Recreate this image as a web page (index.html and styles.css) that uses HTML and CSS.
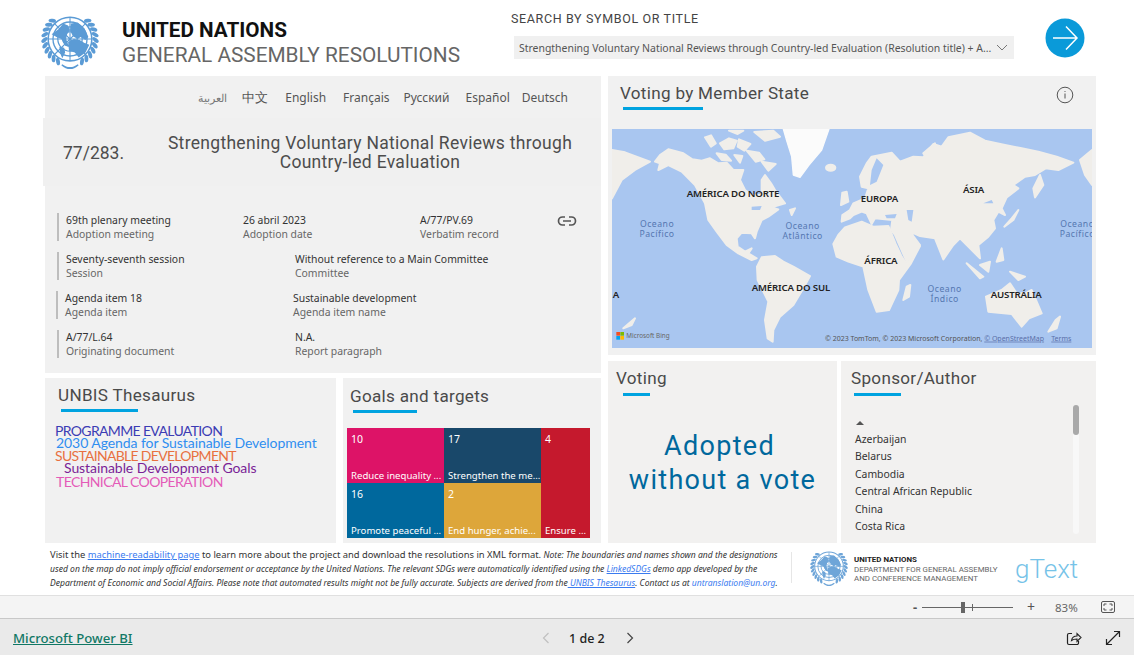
FILE: index.html
```html
<!DOCTYPE html>
<html lang="en">
<head>
<meta charset="utf-8">
<title>United Nations General Assembly Resolutions</title>
<link rel="stylesheet" href="styles.css">
</head>
<body>
<svg class="defs" width="0" height="0" aria-hidden="true">
  <symbol id="un" viewBox="0 0 60 60">
    <g fill="none" stroke="currentColor">
      <circle cx="30" cy="29" r="22.6" stroke-width="1.600"/>
      <circle cx="30" cy="29" r="17.600" stroke-width="1.400"/>
      <circle cx="30" cy="29" r="12.600" stroke-width="1.300"/>
      <circle cx="30" cy="29" r="7.500" stroke-width="1.200"/>
      <path stroke-width="1.100" d="M30 6.400V51.600M7.400 29H52.600M14 13L46 45M46 13L14 45"/>
    </g>
    <g fill="currentColor">
      <path d="M11 24l7-5 5-6 5 2 2 5-3 4-1 5 3 8-4-1-4-7-5-2zM31 13l7-1 7 6 4 9-3 3-5-3-3 2-5-3-3-6zM28 32l6-3 6 1 5 3 5 2-4 8-7 5-4-5-6-2zM19 37l5 1 1 5-3 6-2-5z"/>
      <path d="M22 55c3 2 5 3 8 3s5-1 8-3l1 1c-3 3-6 4-9 4s-6-1-9-4z"/>
      <g class="wreath-r">
        <ellipse cx="30" cy="2.600" rx="2" ry="3.900" transform="rotate(44 30 29) rotate(38 30 2.600)"/>
        <ellipse cx="30" cy="2.600" rx="2" ry="3.900" transform="rotate(56 30 29) rotate(38 30 2.600)"/>
        <ellipse cx="30" cy="2.600" rx="2" ry="3.900" transform="rotate(68 30 29) rotate(38 30 2.600)"/>
        <ellipse cx="30" cy="2.600" rx="2" ry="3.900" transform="rotate(80 30 29) rotate(38 30 2.600)"/>
        <ellipse cx="30" cy="2.600" rx="2" ry="3.900" transform="rotate(92 30 29) rotate(38 30 2.600)"/>
        <ellipse cx="30" cy="2.600" rx="2" ry="3.900" transform="rotate(104 30 29) rotate(38 30 2.600)"/>
        <ellipse cx="30" cy="2.600" rx="2" ry="3.900" transform="rotate(116 30 29) rotate(38 30 2.600)"/>
        <ellipse cx="30" cy="2.600" rx="2" ry="3.900" transform="rotate(128 30 29) rotate(38 30 2.600)"/>
        <ellipse cx="30" cy="2.600" rx="2" ry="3.900" transform="rotate(140 30 29) rotate(38 30 2.600)"/>
        <ellipse cx="30" cy="2.600" rx="2" ry="3.900" transform="rotate(152 30 29) rotate(38 30 2.600)"/>
      </g>
      <g class="wreath-l">
        <ellipse cx="30" cy="2.600" rx="2" ry="3.900" transform="rotate(-44 30 29) rotate(-38 30 2.600)"/>
        <ellipse cx="30" cy="2.600" rx="2" ry="3.900" transform="rotate(-56 30 29) rotate(-38 30 2.600)"/>
        <ellipse cx="30" cy="2.600" rx="2" ry="3.900" transform="rotate(-68 30 29) rotate(-38 30 2.600)"/>
        <ellipse cx="30" cy="2.600" rx="2" ry="3.900" transform="rotate(-80 30 29) rotate(-38 30 2.600)"/>
        <ellipse cx="30" cy="2.600" rx="2" ry="3.900" transform="rotate(-92 30 29) rotate(-38 30 2.600)"/>
        <ellipse cx="30" cy="2.600" rx="2" ry="3.900" transform="rotate(-104 30 29) rotate(-38 30 2.600)"/>
        <ellipse cx="30" cy="2.600" rx="2" ry="3.900" transform="rotate(-116 30 29) rotate(-38 30 2.600)"/>
        <ellipse cx="30" cy="2.600" rx="2" ry="3.900" transform="rotate(-128 30 29) rotate(-38 30 2.600)"/>
        <ellipse cx="30" cy="2.600" rx="2" ry="3.900" transform="rotate(-140 30 29) rotate(-38 30 2.600)"/>
        <ellipse cx="30" cy="2.600" rx="2" ry="3.900" transform="rotate(-152 30 29) rotate(-38 30 2.600)"/>
      </g>
    </g>
  </symbol>
</svg>

<div class="report">
  <header class="top">
    <svg class="un-logo"><use href="#un"/></svg>
    <div class="brand">
      <div class="brand-main">UNITED NATIONS</div>
      <div class="brand-sub">GENERAL ASSEMBLY RESOLUTIONS</div>
    </div>
    <div class="search">
      <div class="search-label">SEARCH BY SYMBOL OR TITLE</div>
      <div class="search-box">
        <span>Strengthening Voluntary National Reviews through Country-led Evaluation (Resolution title) + A...</span>
        <svg class="chev" viewBox="0 0 12 7"><path d="M1 1l5 5 5-5" fill="none" stroke="#777" stroke-width="1"/></svg>
      </div>
    </div>
    <svg class="go" viewBox="0 0 40 40">
      <circle cx="20" cy="20" r="19.500" fill="#0a9ad9"/>
      <path d="M8 20H31M21 8.500L32 20L21 31.500" fill="none" stroke="#fff" stroke-width="1.500"/>
    </svg>
  </header>

  <main class="board">
    <div class="col-left">
      <section class="panel resolution">
        <nav class="langs">
          <span class="lang-ar" lang="ar">العربية</span>
          <span class="lang-zh" lang="zh">中文</span>
          <span class="lang-en">English</span>
          <span>Français</span>
          <span>Русский</span>
          <span class="lang-es">Español</span>
          <span>Deutsch</span>
        </nav>
        <div class="res-head">
          <div class="res-num">77/283.</div>
          <h1 class="res-title">Strengthening Voluntary National Reviews through Country-led Evaluation</h1>
        </div>
        <div class="meta">
          <div class="meta-row cols-3">
            <div class="cell"><b>69th plenary meeting</b><i>Adoption meeting</i></div>
            <div class="cell"><b>26 abril 2023</b><i>Adoption date</i></div>
            <div class="cell"><b>A/77/PV.69</b><i>Verbatim record</i></div>
            <svg class="link-ic" viewBox="0 0 20 12"><path d="M8 2H5.500a4 4 0 0 0 0 8H8M12 2h2.500a4 4 0 0 1 0 8H12M6 6h8" fill="none" stroke="#555" stroke-width="1.700"/></svg>
          </div>
          <div class="meta-row">
            <div class="cell"><b>Seventy-seventh session</b><i>Session</i></div>
            <div class="cell"><b>Without reference to a Main Committee</b><i>Committee</i></div>
          </div>
          <div class="meta-row shift">
            <div class="cell"><b>Agenda item 18</b><i>Agenda item</i></div>
            <div class="cell"><b>Sustainable development</b><i>Agenda item name</i></div>
          </div>
          <div class="meta-row">
            <div class="cell"><b>A/77/L.64</b><i>Originating document</i></div>
            <div class="cell"><b>N.A.</b><i>Report paragraph</i></div>
          </div>
        </div>
      </section>

      <div class="row-left">
        <section class="panel thesaurus">
          <h2 class="head">UNBIS Thesaurus</h2>
          <div class="rule rule-unbis"></div>
          <div class="cloud">
            <div class="w1">PROGRAMME EVALUATION</div>
            <div class="w2">2030 Agenda for Sustainable Development</div>
            <div class="w3">SUSTAINABLE DEVELOPMENT</div>
            <div class="w4">Sustainable Development Goals</div>
            <div class="w5">TECHNICAL COOPERATION</div>
          </div>
        </section>
        <section class="panel goals">
          <h2 class="head">Goals and targets</h2>
          <div class="rule rule-goals"></div>
          <div class="treemap">
            <div class="tile t10"><span>10</span><span>Reduce inequality ...</span></div>
            <div class="tile t17"><span>17</span><span>Strengthen the me...</span></div>
            <div class="tile t4"><span>4</span><span>Ensure ...</span></div>
            <div class="tile t16"><span>16</span><span>Promote peaceful ...</span></div>
            <div class="tile t2"><span>2</span><span>End hunger, achie...</span></div>
          </div>
        </section>
      </div>
    </div>

    <div class="col-right">
      <section class="panel mapcard">
        <div class="map-head">
          <h2 class="head">Voting by Member State</h2>
          <svg class="info" viewBox="0 0 18 18"><circle cx="9" cy="9" r="7.800" fill="none" stroke="#555" stroke-width="1"/><path d="M9 7.500v5" stroke="#555" stroke-width="1"/><circle cx="9" cy="5.500" r=".6" fill="#555"/></svg>
        </div>
        <div class="rule rule-map"></div>
        <svg class="map" viewBox="21 27 1440 657">
          <rect x="21" y="27" width="1440" height="657" fill="#a9c6f0"/>
          <g class="land">
            <path d="M150 125L165 105L190 88L235 100L262 118L290 122L315 115L340 130L365 128L385 150L415 150L405 180L420 210L440 225L470 225L470 180L480 165L498 190L510 210L540 250L500 262L520 268L490 290L470 300L455 335L450 355L440 340L410 338L395 355L398 380L420 395L440 385L430 400L455 415L440 420L400 400L365 375L335 335L310 300L300 250L270 195L230 155L190 135L160 150L165 130Z"/>
            <path d="M300 52L318 46L332 70L318 80ZM345 70L372 55L395 62L385 85L358 88ZM402 58L436 72L418 92L398 80ZM335 100L362 104L378 122L350 120ZM388 105L412 108L405 128ZM425 92L462 98L478 118L452 125ZM470 125L512 132L490 152ZM448 36L505 32L525 50L480 62ZM372 32L415 32L398 42ZM555 270L570 265L560 285Z"/>
            <path d="M470 412L510 408L535 425L565 440L615 468L595 505L565 555L525 590L505 630L503 665L488 655L480 600L490 545L458 480L456 440Z"/>
            <path d="M685 372L700 345L720 322L770 305L805 320L850 318L872 372L890 410L905 432L945 378L918 430L882 480L880 510L852 570L815 575L790 510L775 440L730 425L695 410Z"/>
            <path d="M710 305L712 285L735 270L745 250L780 235L790 205L770 200L765 170L785 130L800 110L860 98L885 125L925 110L955 112L985 72L1010 80L1030 52L1095 38L1140 62L1200 75L1250 85L1300 95L1355 110L1405 128L1360 150L1322 145L1290 165L1260 170L1225 195L1240 205L1205 232L1190 265L1200 285L1180 275L1165 300L1170 325L1150 350L1120 375L1125 415L1095 385L1065 355L1045 375L1015 418L990 355L945 348L915 335L945 375L905 425L870 345L858 330L862 300L810 295L800 312L785 280L770 275L745 285L735 295Z"/>
            <path d="M21 90L60 97L135 125L90 150L50 180L21 235Z"/>
            <path d="M1461 90L1425 120L1440 165L1461 195Z"/>
            <path d="M1143 530L1190 510L1215 490L1235 520L1260 520L1280 510L1310 580L1272 595L1250 620L1220 582L1150 575Z"/>
            <path d="M905 500L916 495L912 530L895 540ZM1352 600L1365 590L1355 625L1330 635ZM55 625L90 595L80 615ZM1305 165L1315 195L1290 232L1285 205ZM1240 270L1225 300L1198 320L1220 295ZM712 218L725 215L730 245L708 255ZM1085 430L1135 470L1125 475ZM1125 435L1155 425L1150 455ZM1215 455L1260 470L1240 480ZM1175 425L1190 385L1195 420ZM955 100L990 70L970 120Z"/>
            <ellipse cx="677" cy="143" rx="14" ry="9"/>
          </g>
          <path class="ice" d="M535 27H672L650 90L612 135L585 172L565 165L560 110L545 62Z"/>
          <path class="water" d="M905 270L925 270L920 305L910 300ZM840 285L875 282L870 295L845 295ZM815 115L835 135L815 185L795 195L800 150ZM440 260L470 258L465 270L440 270ZM1135 250L1160 240L1165 250Z"/>
          <g class="map-cont">
            <text x="245" y="230">AMÉRICA DO NORTE</text>
            <text x="767" y="245">EUROPA</text>
            <text x="1074" y="220">ÁSIA</text>
            <text x="778" y="433">ÁFRICA</text>
            <text x="440" y="513">AMÉRICA DO SUL</text>
            <text x="1157" y="533">AUSTRÁLIA</text>
            <text x="23" y="533">A</text>
          </g>
          <g class="map-ocean">
            <text x="156" y="322">Oceano</text>
            <text x="156" y="352">Pacífico</text>
            <text x="593" y="327">Oceano</text>
            <text x="593" y="357">Atlântico</text>
            <text x="1019" y="516">Oceano</text>
            <text x="1019" y="546">Índico</text>
            <text x="1417" y="322">Oceano</text>
            <text x="1417" y="352">Pacífico</text>
          </g>
          <rect x="34" y="636" width="11" height="11" fill="#f25022"/>
          <rect x="46" y="636" width="11" height="11" fill="#7fba00"/>
          <rect x="34" y="648" width="11" height="11" fill="#00a4ef"/>
          <rect x="46" y="648" width="11" height="11" fill="#ffb900"/>
          <text class="map-bing" x="64" y="655">Microsoft Bing</text>
          <text class="map-attr" x="660" y="662">© 2023 TomTom, © 2023 Microsoft Corporation, <tspan class="map-lnk">© OpenStreetMap</tspan> <tspan class="map-lnk" dx="16">Terms</tspan></text>
        </svg>
      </section>

      <div class="row-right">
        <section class="panel voting">
          <h2 class="head">Voting</h2>
          <div class="rule rule-voting"></div>
          <div class="verdict"><span class="verdict-a">Adopted</span>without a vote</div>
        </section>
        <section class="panel sponsor">
          <h2 class="head">Sponsor/Author</h2>
          <div class="rule rule-sponsor"></div>
          <div class="scroll-wrap">
            <ul class="sponsors">
              <li class="caret-row"><span class="caret"></span></li>
              <li>Azerbaijan</li>
              <li>Belarus</li>
              <li>Cambodia</li>
              <li>Central African Republic</li>
              <li>China</li>
              <li>Costa Rica</li>
            </ul>
            <div class="scrolltrack"><div class="scrollthumb"></div></div>
          </div>
        </section>
      </div>
    </div>
  </main>

  <footer class="note">
    <p class="note-text">Visit the <a>machine-readability page</a> to learn more about the project and download the resolutions in XML format. <em>Note: The boundaries and names shown and the designations<br>used on the map do not imply official endorsement or acceptance by the United Nations. The relevant SDGs were automatically identified using the <a>LinkedSDGs</a> demo app developed by the<br>Department of Economic and Social Affairs. Please note that automated results might not be fully accurate. Subjects are derived from the<a> UNBIS Thesaurus</a>. Contact us at <a class="plain">untranslation@un.org</a>.</em></p>
    <div class="vr"></div>
    <svg class="un-logo-sm"><use href="#un"/></svg>
    <div class="dept">
      <b>UNITED NATIONS</b>
      <span>DEPARTMENT FOR GENERAL ASSEMBLY</span>
      <span>AND CONFERENCE MANAGEMENT</span>
    </div>
    <div class="gtext">gText</div>
  </footer>
</div>

<div class="zoombar">
  <span class="zm">-</span>
  <div class="slider"><div class="tick"></div><div class="thumb"></div></div>
  <span class="zp">+</span>
  <span class="pct">83%</span>
  <svg class="fit" viewBox="0 0 14 12"><rect x=".5" y=".5" width="13" height="11" rx="1.500" fill="none" stroke="#555"/><path d="M3 5V3h2.500M11 5V3H8.500M3 7v2h2.500M11 7v2H8.500" fill="none" stroke="#555"/></svg>
</div>

<div class="pbibar">
  <a class="pbi">Microsoft Power BI</a>
  <div class="pager">
    <svg class="pg pg-off" viewBox="0 0 8 12"><path d="M6.500 1L1.500 6l5 5" fill="none" stroke="#c0c0c0" stroke-width="1.200"/></svg>
    <span class="pg-text">1 de 2</span>
    <svg class="pg" viewBox="0 0 8 12"><path d="M1.500 1l5 5-5 5" fill="none" stroke="#444" stroke-width="1.200"/></svg>
  </div>
  <div class="acts">
    <svg class="act" viewBox="0 0 16 16"><path d="M6 3.500H3a1.500 1.500 0 0 0-1.500 1.500v8A1.500 1.500 0 0 0 3 14.500h8a1.500 1.500 0 0 0 1.500-1.500v-2" fill="none" stroke="#222" stroke-width="1.200"/><path d="M5.500 10.500c.5-3 3-4.500 5.500-4.500V3.500l4 4-4 4V9c-2 0-4 .3-5.500 1.500z" fill="none" stroke="#222" stroke-width="1.100"/></svg>
    <svg class="act" viewBox="0 0 16 16"><path d="M1.500 14.500l13-13M9 1.500h5.500V7M7 14.500H1.500V9" fill="none" stroke="#222" stroke-width="1.200"/></svg>
  </div>
</div>
</body>
</html>
```

FILE: styles.css
```css
* { box-sizing: border-box; }
html, body { margin: 0; padding: 0; }
body {
  width: 1134px;
  height: 655px;
  overflow: hidden;
  background: #fff;
  font-family: "Noto Sans", "Open Sans", sans-serif;
  color: #333;
}
.defs { position: absolute; }

.report { height: 595px; background: #fff; }

/* header */
.top { display: flex; height: 76px; }
.un-logo { width: 58px; height: 58px; margin: 11px 0 0 41px; color: #5b9bd5; flex: none; }
.brand { width: 389px; margin: 17px 0 0 23px; flex: none; white-space: nowrap; }
.brand-main {
  font: 700 20.700px/26px "Roboto", sans-serif;
  color: #111;
}
.brand-sub {
  font: 400 20.800px/24px "Roboto", sans-serif;
  color: #666;
}
.search { width: 504px; flex: none; padding-top: 11px; }
.search-label {
  font: 400 12.500px/16px "Roboto", sans-serif;
  letter-spacing: .64px;
  color: #444;
}
.search-box {
  display: flex; align-items: center; justify-content: space-between;
  height: 23px; width: 500px; margin: 9px 0 0 3px; padding: 0 6px 0 5px;
  background: #f0f0f0;
  font-size: 10.450px; color: #555; white-space: nowrap;
}
.chev { width: 12px; height: 7px; flex: none; }
.go { width: 40px; height: 40px; margin: 18px 0 0 30px; flex: none; }

/* board */
.board { display: flex; gap: 7px; padding-left: 45px; }
.col-left { width: 556px; display: flex; flex-direction: column; gap: 5px; }
.col-right { width: 488px; display: flex; flex-direction: column; gap: 6px; }
.panel { background: #f1f1f1; }
.row-left { display: flex; gap: 7px; height: 165px; }
.row-right { display: flex; gap: 4px; height: 182px; }

.head {
  margin: 0;
  font: 400 17.100px/22px "Roboto", sans-serif;
  letter-spacing: .3px;
  color: #4a4a4a;
}
.rule { height: 3px; background: #00a3e0; }

/* resolution */
.resolution { height: 297px; }
.langs {
  display: flex; justify-content: flex-end; align-items: center; gap: 14px;
  height: 42px; padding-right: 33px;
  font-size: 12px; color: #555;
}
.lang-ar { font-size: 11px; color: #777; margin-right: 1px; }
.lang-zh { font-size: 13px; margin-right: 3px; }
.lang-en { margin-right: 3px; }
.lang-es { margin: 0 -2px 0 2px; }
.res-head {
  display: flex; align-items: center; height: 68px;
  margin-left: -2px; background: #f0f0f0; color: #4d4d4d;
}
.res-num { width: 117px; padding-left: 20px; margin-top: 2px; font: 400 17.500px/22px "Roboto", sans-serif; flex: none; }
.res-title {
  width: 420px; margin: 2px 0 0;
  font: 400 17.500px/19px "Roboto", sans-serif;
  letter-spacing: .3px; text-align: center;
}
.meta { padding: 27px 0 0 12px; }
.meta-row {
  position: relative;
  display: grid; grid-template-columns: 229px 1fr;
  height: 28px; margin-bottom: 11px; padding-left: 7px;
  border-left: 2px solid #bdbdbd;
}
.meta-row.cols-3 { grid-template-columns: 177px 177px 1fr; }
.meta-row.shift { margin-left: -1px; grid-template-columns: 228px 1fr; }
.cell b, .cell i {
  display: block; font-style: normal; font-weight: 400;
  font-size: 10.400px; line-height: 14px; white-space: nowrap;
}
.cell b { color: #333; }
.cell i { color: #666; }
.link-ic { position: absolute; right: 24px; top: 2px; width: 20px; height: 12px; }

/* thesaurus */
.thesaurus { width: 291px; padding: 6px 0 0 13px; }
.rule-unbis { width: 77px; margin: 3px 0 0 3px; }
.cloud {
  margin: 13px 0 0 -3px;
  font-family: "Lato", sans-serif; font-size: 14px; line-height: 12.400px; white-space: nowrap;
}
.w1 { color: #3c3cb4; letter-spacing: -.65px; }
.w2 { color: #2f8ef0; margin-left: 1px; letter-spacing: -.07px; }
.w3 { color: #e8703f; letter-spacing: -.7px; }
.w4 { color: #7a1f96; margin-left: 9px; letter-spacing: -.07px; }
.w5 { color: #e45bb8; margin: 1px 0 0 1px; letter-spacing: -.6px; }

/* goals */
.goals { width: 258px; padding: 7px 0 0 7px; }
.rule-goals { width: 64px; margin: 3px 0 0 3px; }
.treemap {
  display: grid; grid-template-columns: 97px 97px 49px; grid-template-rows: 55px 55px;
  margin: 15px 0 0 -3px; width: 243px;
}
.tile {
  display: flex; flex-direction: column; justify-content: space-between;
  padding: 4px 4px 0 4px;
  font-size: 9.600px; line-height: 14px; color: #fff; white-space: nowrap; overflow: hidden;
}
.tile span:first-child { font-size: 10.500px; }
.t10 { background: #dd1367; }
.t17 { background: #19486a; }
.t4 { background: #c5192d; grid-column: 3; grid-row: 1 / 3; }
.t16 { background: #00689d; }
.t2 { background: #dda63a; }

/* map card */
.mapcard { height: 279px; }
.map-head { display: flex; justify-content: space-between; align-items: flex-start; padding: 6px 22px 0 12px; }
.info { width: 18px; height: 18px; margin-top: 4px; }
.rule-map { width: 80px; margin: 3px 0 0 15px; }
.map { display: block; width: 480px; height: 219px; margin: 19px 0 0 4px; }
.land { fill: #f0eeea; stroke: #f0eeea; stroke-width: 6; stroke-linejoin: round; filter: blur(2px); }
.ice { fill: #fbfbfb; stroke: #fbfbfb; stroke-width: 4; stroke-linejoin: round; filter: blur(2px); }
.water { fill: #a9c6f0; filter: blur(1px); }
.map-cont text { font: 600 29px "Noto Sans", sans-serif; fill: #222; letter-spacing: -.5px; }
.map-ocean text { font: 400 26px "Noto Sans", sans-serif; fill: #5577b0; text-anchor: middle; letter-spacing: 1.500px; }
.map-bing { font: 400 19px "Noto Sans", sans-serif; fill: #666; }
.map-attr { font: 400 21px "Noto Sans", sans-serif; fill: #555; }
.map-lnk { fill: #5a6fa8; text-decoration: underline; }

/* voting */
.voting { width: 229px; padding-top: 6px; background: #f2f1f0; }
.voting .head { padding-left: 8px; }
.rule-voting { width: 27px; margin: 4px 0 0 15px; }
.verdict {
  margin-top: 33px; text-align: center;
  font: 400 27px/34px "Roboto", sans-serif; letter-spacing: 1.300px; color: #00689d;
}
.verdict-a { display: block; padding-right: 6px; }

/* sponsor */
.sponsor { width: 255px; padding: 6px 0 0 10px; background: #f2f1f0; }
.rule-sponsor { width: 47px; margin: 4px 0 0 3px; }
.scroll-wrap { display: flex; justify-content: space-between; margin-top: 9px; padding-right: 17px; }
.sponsors { list-style: none; margin: 0; padding: 10px 0 0 4px; font-size: 10.400px; line-height: 17.400px; color: #333; }
.caret-row { height: 10px; position: relative; }
.caret {
  display: block; width: 0; height: 0; margin: 6px 0 0 1px;
  border: 4px solid transparent; border-top: 0; border-bottom: 4px solid #555;
}
.scrolltrack { width: 6px; height: 129px; background: #f8f8f8; border-radius: 3px; }
.scrollthumb { height: 30px; background: #a9a9a9; border-radius: 3px; }

/* footer note */
.note { display: flex; align-items: flex-start; height: 52px; padding: 5px 0 0 50px; }
.note-text {
  width: 728px; margin: 0;
  font-size: 9.400px; line-height: 14px; color: #333; flex: none; white-space: nowrap;
}
.note-text em { font-size: 8.550px; }
.note-text a { color: #3a7bf0; text-decoration: underline; }
.note-text a.plain { text-decoration: none; }
.vr { width: 1px; height: 31px; margin: 4px 0 0 13px; background: #e6e6e6; flex: none; }
.un-logo-sm { width: 38px; height: 38px; margin: 0 0 0 18px; color: #6ea5d8; flex: none; }
.dept { display: flex; flex-direction: column; width: 161px; margin: 7px 0 0 6px; font: 400 7.900px/9.500px "Roboto", sans-serif; color: #666; white-space: nowrap; }
.dept b { color: #222; font-weight: 700; }
.gtext { font: 300 26px/30px "Roboto", sans-serif; color: #76c3e8; margin-top: 6px; }

/* zoom bar */
.zoombar {
  display: flex; align-items: center; height: 24px; padding-left: 913px;
  background: #f4f4f4; border-top: 1px solid #e0e0e0; border-bottom: 1px solid #c8c8c8;
  color: #555;
}
.zm { width: 9px; font-size: 13px; font-weight: 700; line-height: 18px; }
.slider { position: relative; width: 91px; height: 1px; background: #666; }
.tick { position: absolute; left: 50px; top: -3px; width: 1px; height: 7px; background: #666; }
.thumb { position: absolute; left: 39px; top: -5px; width: 4px; height: 11px; background: #666; }
.zp { margin-left: 14px; font-size: 14px; line-height: 18px; width: 17px; }
.pct { width: 46px; margin-left: 11px; font-size: 11.500px; color: #666; }
.fit { width: 14px; height: 12px; }

/* bottom bar */
.pbibar { display: flex; align-items: center; height: 36px; padding: 2px 13px 0; background: #eaeaea; }
.pbi { width: 120px; flex: none; font-size: 13.200px; font-weight: 500; color: #117865; text-decoration: underline; white-space: nowrap; }
.pager { display: flex; align-items: center; margin-left: 409px; flex: none; }
.pg { width: 8px; height: 12px; }
.pg-text { margin: 0 21px 0 19px; font-size: 12.500px; font-weight: 500; color: #222; white-space: nowrap; }
.acts { display: flex; gap: 23px; margin-left: 432px; flex: none; }
.act { width: 16px; height: 16px; }
```
